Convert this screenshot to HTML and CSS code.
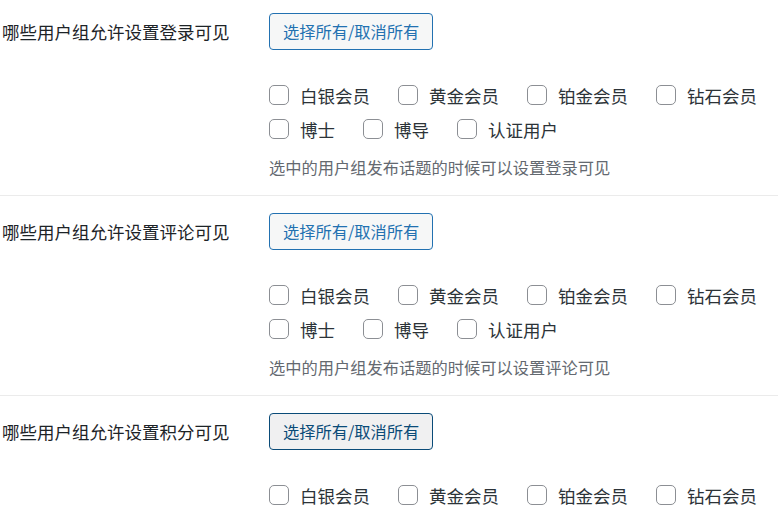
FILE: index.html
```html
<!DOCTYPE html>
<html lang="zh-CN">
<head>
	<meta charset="UTF-8">
	<meta name="viewport" content="width=device-width, initial-scale=1.0">
	<title>用户组可见设置</title>

	<link rel="stylesheet" href="styles.css">
</head>
<body>
	<div class="form-table">
		<div class="form-row">
			<div class="form-row__label">哪些用户组允许设置登录可见</div>
			<div class="form-row__field">
				<button class="button">选择所有/取消所有</button>
				<div class="options">
					<label class="option"><input type="checkbox"> 白银会员</label>
					<label class="option"><input type="checkbox"> 黄金会员</label>
					<label class="option"><input type="checkbox"> 铂金会员</label>
					<label class="option"><input type="checkbox"> 钻石会员</label>
					<label class="option"><input type="checkbox"> 博士</label>
					<label class="option"><input type="checkbox"> 博导</label>
					<label class="option"><input type="checkbox"> 认证用户</label>
				</div>
				<p class="description">选中的用户组发布话题的时候可以设置登录可见</p>
			</div>
		</div>
		<div class="form-row">
			<div class="form-row__label">哪些用户组允许设置评论可见</div>
			<div class="form-row__field">
				<button class="button">选择所有/取消所有</button>
				<div class="options">
					<label class="option"><input type="checkbox"> 白银会员</label>
					<label class="option"><input type="checkbox"> 黄金会员</label>
					<label class="option"><input type="checkbox"> 铂金会员</label>
					<label class="option"><input type="checkbox"> 钻石会员</label>
					<label class="option"><input type="checkbox"> 博士</label>
					<label class="option"><input type="checkbox"> 博导</label>
					<label class="option"><input type="checkbox"> 认证用户</label>
				</div>
				<p class="description">选中的用户组发布话题的时候可以设置评论可见</p>
			</div>
		</div>
		<div class="form-row">
			<div class="form-row__label">哪些用户组允许设置积分可见</div>
			<div class="form-row__field">
				<button class="button button--hover">选择所有/取消所有</button>
				<div class="options">
					<label class="option"><input type="checkbox"> 白银会员</label>
					<label class="option"><input type="checkbox"> 黄金会员</label>
					<label class="option"><input type="checkbox"> 铂金会员</label>
					<label class="option"><input type="checkbox"> 钻石会员</label>
					<label class="option"><input type="checkbox"> 博士</label>
					<label class="option"><input type="checkbox"> 博导</label>
					<label class="option"><input type="checkbox"> 认证用户</label>
				</div>
				<p class="description">选中的用户组发布话题的时候可以设置积分可见</p>
			</div>
		</div>
	</div>
</body>
</html>
```

FILE: styles.css
```css
* { box-sizing: border-box }
body {
	margin: 0;
	background: #fff;
	color: #1d2327;
	font-family: "Noto Sans CJK SC", "Noto Sans", sans-serif;
	font-size: 17.5px;
	overflow: hidden;
}
.form-table {
	width: 100%;
}
.form-row {
	display: flex;
	align-items: flex-start;
	padding: 17px 0 16px;
	border-bottom: 1px solid #ebebeb;
}
.form-row:first-child {
	padding-top: 13px;
}
.form-row__label {
	flex: 0 0 269px;
	padding-left: 2px;
	line-height: 37px;
	color: #1d2327;
}
.form-row__field {
	flex: 1;
	min-width: 0;
}
.button {
	display: block;
	height: 37px;
	padding: 0 13px;
	margin: 0;
	border: 1px solid #2271b1;
	border-radius: 4px;
	background: #f6f7f7;
	color: #2271b1;
	font-family: inherit;
	font-size: 16.25px;
	line-height: 35px;
	cursor: pointer;
}
.button--hover {
	border-color: #0a4b78;
	background: #f0f0f1;
	color: #0a4b78;
}
.options {
	display: flex;
	flex-wrap: wrap;
	column-gap: 28px;
	margin-top: 28px;
}
.option {
	display: inline-flex;
	align-items: center;
	height: 34px;
	white-space: nowrap;
	color: #2c3338;
}
.option input {
	-webkit-appearance: none;
	appearance: none;
	width: 20px;
	height: 20px;
	margin: 0 11px 0 0;
	border: 1px solid #8c8f94;
	border-radius: 5px;
	background: #fff;
}
.description {
	margin: 9px 0 0;
	font-size: 16.25px;
	line-height: 24px;
	color: #646970;
}
```
